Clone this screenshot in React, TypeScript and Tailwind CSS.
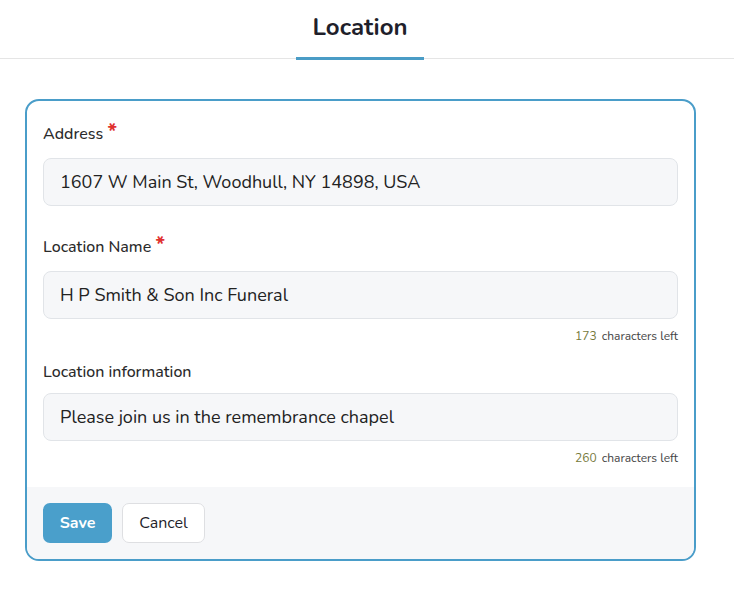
import { useState } from 'react';

const FONT = "font-['Nunito','Lato','Noto_Sans',sans-serif]";

type FieldProps = {
  label: string;
  required?: boolean;
  value: string;
  max?: number;
  className?: string;
  onChange: (v: string) => void;
};

function Field({ label, required, value, max, className, onChange }: FieldProps) {
  return (
    <div className={className}>
      <label className="flex items-start text-[16px] font-medium leading-[20px] text-[#2b2b2b]">
        {label}
        {required && (
          <span className="ml-[4px] -mt-[3px] text-[22px] font-bold leading-[23px] text-[#e0312f]">*</span>
        )}
      </label>
      <input
        className={`${required ? 'mt-[14px]' : 'mt-[11px]'} block h-[48px] w-full rounded-[8px] border border-[#e1e4e8] bg-[#f6f7f9] px-[16px] text-[18px] text-[#222] outline-none`}
        value={value}
        onChange={(e) => onChange(e.target.value)}
      />
      {max !== undefined && (
        <div className="mt-[10px] text-right text-[12px] leading-[14px] text-[#444]">
          <span className="text-[#76793a]">{max - value.length}</span>
          <span className="ml-[5px]">characters left</span>
        </div>
      )}
    </div>
  );
}

export default function App() {
  const [address, setAddress] = useState('1607 W Main St, Woodhull, NY 14898, USA');
  const [name, setName] = useState('H P Smith & Son Inc Funeral');
  const [info, setInfo] = useState('Please join us in the remembrance chapel');

  return (
    <div className={`${FONT} min-h-[598px] w-[734px] bg-white`}>
      <div className="flex justify-center border-b border-[#e5e5e5] pr-[14px]">
        <div className="relative w-[128px] pt-[12px] pb-[16px] text-center text-[24px] font-bold leading-[30px] text-[#1f1f2b]">
          Location
          <span className="absolute -bottom-[2px] left-0 right-0 h-[3px] bg-[#4a9cc6]" />
        </div>
      </div>

      <div className="ml-[25px] mt-[40px] w-[671px] overflow-hidden rounded-[14px] border-2 border-[#4a9dc9]">
        <div className="px-[16px] pt-[23px] pb-[22px]">
          <Field label="Address" required value={address} onChange={setAddress} />
          <Field className="mt-[31px]" label="Location Name" required value={name} max={200} onChange={setName} />
          <Field className="mt-[19px]" label="Location information" value={info} max={300} onChange={setInfo} />
        </div>
        <div className="flex gap-[10px] bg-[#f6f7f9] px-[16px] pt-[16px] pb-[16px]">
          <button className="h-[40px] w-[69px] rounded-[7px] bg-[#4a9fcb] text-[16px] font-bold text-white">
            Save
          </button>
          <button className="h-[40px] w-[83px] rounded-[7px] border border-[#dedfe2] bg-white text-[16px] text-[#1f1f2b]">
            Cancel
          </button>
        </div>
      </div>
    </div>
  );
}
